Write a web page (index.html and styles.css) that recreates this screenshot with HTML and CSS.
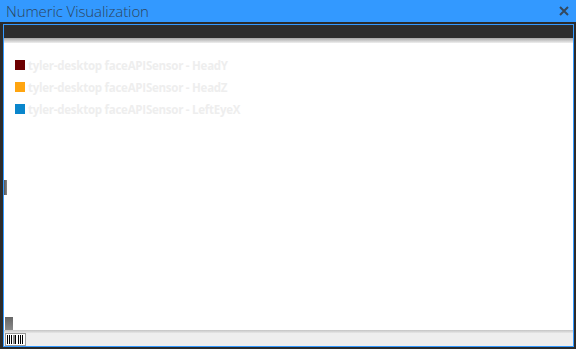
FILE: index.html
```html
<!DOCTYPE html>
<html>
<head>
<meta charset="utf-8">
<link rel="stylesheet" href="styles.css">
</head>
<body>
<div class="window">
  <div class="titlebar">
    <span class="title">Numeric Visualization</span>
    <svg class="close" width="10" height="10" viewBox="0 0 10 10"><path d="M1 1 L9 9 M9 1 L1 9" stroke="#34495e" stroke-width="2" fill="none"/></svg>
  </div>
  <div class="frame">
    <div class="toolbar"></div>
    <div class="shade"></div>
    <div class="plot">
      <div class="legend">
        <div class="item"><span class="swatch" style="background:#6e0000"></span><span class="label">tyler-desktop faceAPISensor - HeadY</span></div>
        <div class="item"><span class="swatch" style="background:#ffa510"></span><span class="label">tyler-desktop faceAPISensor - HeadZ</span></div>
        <div class="item"><span class="swatch" style="background:#0a86cc"></span><span class="label">tyler-desktop faceAPISensor - LeftEyeX</span></div>
      </div>
      <div class="vthumb"></div>
      <div class="cthumb"></div>
    </div>
    <div class="shade-bottom"></div>
    <div class="statusbar">
      <div class="barcode">
        <svg width="19" height="11" viewBox="0 0 19 11">
          <rect x="1" y="1" width="1" height="9" fill="#000"/>
          <rect x="3" y="1" width="1" height="9" fill="#000"/>
          <rect x="5" y="1" width="1" height="9" fill="#000"/>
          <rect x="7" y="1" width="2" height="9" fill="#888"/>
          <rect x="9" y="1" width="1" height="9" fill="#000"/>
          <rect x="12" y="1" width="1" height="9" fill="#000"/>
          <rect x="14" y="1" width="1" height="9" fill="#000"/>
          <rect x="16" y="1" width="1" height="9" fill="#000"/>
        </svg>
      </div>
    </div>
  </div>
</div>
</body>
</html>
```
FILE: styles.css
```css
html, body {
  margin: 0;
  padding: 0;
  background: #2b2b2b;
}
.window {
  width: 576px;
  height: 349px;
  background: #2b2b2b;
  display: flex;
  flex-direction: column;
  overflow: hidden;
}
.titlebar {
  height: 22px;
  background: #3399ff;
  display: flex;
  align-items: center;
  justify-content: space-between;
  padding: 0 7px 0 6px;
  flex: none;
}
.title {
  font-family: "Open Sans", "Noto Sans", sans-serif;
  font-size: 15px;
  font-weight: 300;
  color: #2c4560;
  letter-spacing: -0.1px;
  line-height: 22px;
}
.close {
  display: block;
  margin-top: -1px;
}
.frame {
  flex: 1;
  margin: 2px 2px 2px 3px;
  border: 1px solid #3399ff;
  display: flex;
  flex-direction: column;
  background: #ffffff;
}
.toolbar {
  height: 13px;
  background: #2d2d2d;
  flex: none;
}
.shade {
  height: 5px;
  background: linear-gradient(#a6a6a6, #efefef);
  flex: none;
}
.plot {
  flex: 1;
  position: relative;
  background: #ffffff;
}
.legend {
  padding: 17px 0 0 11px;
  display: flex;
  flex-direction: column;
  gap: 12px;
}
.item {
  display: flex;
  align-items: center;
  height: 10px;
}
.swatch {
  width: 10px;
  height: 10px;
  flex: none;
  margin-right: 3px;
}
.label {
  font-family: "Open Sans", "Noto Sans", sans-serif;
  font-weight: 700;
  font-size: 11.5px;
  color: #eeeeee;
  letter-spacing: -0.25px;
  white-space: nowrap;
}
.vthumb {
  position: absolute;
  left: 0;
  top: 137px;
  width: 3px;
  height: 15px;
  background: linear-gradient(90deg, #555, #888);
}
.cthumb {
  position: absolute;
  left: 1px;
  bottom: 0;
  width: 8px;
  height: 13px;
  background: linear-gradient(#666, #8a8a8a);
}
.shade-bottom {
  height: 3px;
  background: linear-gradient(#c4c4c4, #e6e6e6);
  flex: none;
}
.statusbar {
  height: 13px;
  background: #eeeeee;
  flex: none;
  display: flex;
  align-items: flex-end;
  padding-left: 1px;
}
.barcode {
  width: 19px;
  height: 11px;
  border: 1px solid #9a9a9a;
  background: #ffffff;
  display: flex;
}
.barcode svg {
  display: block;
}
```
